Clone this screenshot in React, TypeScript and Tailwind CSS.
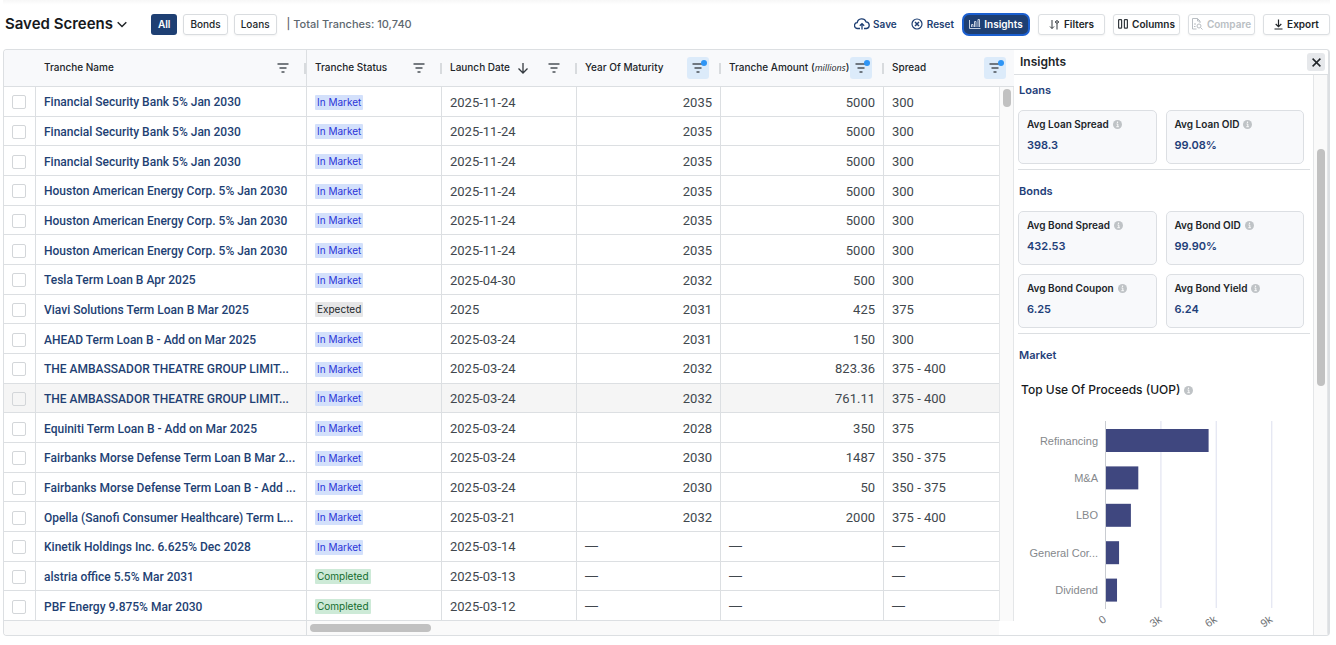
import { ReactNode } from "react";

type Status = "In Market" | "Expected" | "Completed";
type Tranche = { name: string; status: Status; launch: string; year: string; amount: string; spread: string };

const row = (name: string, status: Status, launch: string, year: string, amount: string, spread: string): Tranche => ({
  name,
  status,
  launch,
  year,
  amount,
  spread,
});

const tranches: Tranche[] = [
  row("Financial Security Bank 5% Jan 2030", "In Market", "2025-11-24", "2035", "5000", "300"),
  row("Financial Security Bank 5% Jan 2030", "In Market", "2025-11-24", "2035", "5000", "300"),
  row("Financial Security Bank 5% Jan 2030", "In Market", "2025-11-24", "2035", "5000", "300"),
  row("Houston American Energy Corp. 5% Jan 2030", "In Market", "2025-11-24", "2035", "5000", "300"),
  row("Houston American Energy Corp. 5% Jan 2030", "In Market", "2025-11-24", "2035", "5000", "300"),
  row("Houston American Energy Corp. 5% Jan 2030", "In Market", "2025-11-24", "2035", "5000", "300"),
  row("Tesla Term Loan B Apr 2025", "In Market", "2025-04-30", "2032", "500", "300"),
  row("Viavi Solutions Term Loan B Mar 2025", "Expected", "2025", "2031", "425", "375"),
  row("AHEAD Term Loan B - Add on Mar 2025", "In Market", "2025-03-24", "2031", "150", "300"),
  row("THE AMBASSADOR THEATRE GROUP LIMIT...", "In Market", "2025-03-24", "2032", "823.36", "375 - 400"),
  row("THE AMBASSADOR THEATRE GROUP LIMIT...", "In Market", "2025-03-24", "2032", "761.11", "375 - 400"),
  row("Equiniti Term Loan B - Add on Mar 2025", "In Market", "2025-03-24", "2028", "350", "375"),
  row("Fairbanks Morse Defense Term Loan B Mar 2...", "In Market", "2025-03-24", "2030", "1487", "350 - 375"),
  row("Fairbanks Morse Defense Term Loan B - Add ...", "In Market", "2025-03-24", "2030", "50", "350 - 375"),
  row("Opella (Sanofi Consumer Healthcare) Term L...", "In Market", "2025-03-21", "2032", "2000", "375 - 400"),
  row("Kinetik Holdings Inc. 6.625% Dec 2028", "In Market", "2025-03-14", "", "", ""),
  row("alstria office 5.5% Mar 2031", "Completed", "2025-03-13", "", "", ""),
  row("PBF Energy 9.875% Mar 2030", "Completed", "2025-03-12", "", "", ""),
];

const highlighted = 10;

const statusStyle: Record<Status, string> = {
  "In Market": "bg-[#d3e0fb] text-[#2b35d8]",
  Expected: "bg-[#e6e6e7] text-[#212529]",
  Completed: "bg-[#cdead7] text-[#146c2e]",
};

function FilterIcon() {
  return (
    <svg width="14" height="12" viewBox="0 0 14 12" stroke="#4b5258" strokeWidth="1.6" fill="none" aria-hidden="true">
      <path d="M1.500 2h11M3.500 6h7M5.500 10h3" />
    </svg>
  );
}

function FilterButton({ label, active = false }: { label: string; active?: boolean }) {
  return (
    <button
      type="button"
      aria-label={`Filter ${label}`}
      className={
        active
          ? "relative flex h-[22px] w-[22px] shrink-0 items-center justify-center rounded-[3px] bg-[#dcebfa]"
          : "flex h-[22px] w-[22px] shrink-0 items-center justify-center"
      }
    >
      <FilterIcon />
      {active && <span className="absolute top-[3px] right-[2px] h-[6px] w-[6px] rounded-full bg-[#2f95f5]" />}
    </button>
  );
}

function HeaderCell({
  label,
  note,
  active,
  sorted,
  divider = true,
  frame = "",
  span = 1,
}: {
  label: string;
  note?: string;
  active?: boolean;
  sorted?: boolean;
  divider?: boolean;
  frame?: string;
  span?: number;
}) {
  return (
    <th scope="col" colSpan={span} className={`h-[37px] border-b border-[#dcdfe2] bg-[#f8f9fb] p-0 font-medium ${frame}`}>
      <div className="flex items-center">
        <span className="flex-1 pb-px pl-2 text-left whitespace-nowrap">
          {label}
          {note && (
            <>
              {" "}(<em className="font-['Open_Sans',sans-serif] text-[9px] font-normal">{note}</em>)
            </>
          )}
        </span>
        {sorted && (
          <svg className="mr-3.5 shrink-0" width="12" height="12" viewBox="0 0 12 12" fill="none" stroke="#33393e" strokeWidth="1.3" aria-label="Sorted descending">
            <path d="M6 1v10M1.500 6.500L6 11l4.500-4.500" />
          </svg>
        )}
        <FilterButton label={label} active={active} />
        <span className={divider ? "ml-2.5 h-[11px] w-[2px] bg-[#d8dbde]" : "ml-2 h-[11px]"} />
      </div>
    </th>
  );
}

function InfoIcon() {
  return (
    <svg width="9" height="9" viewBox="0 0 9 9" aria-hidden="true">
      <circle cx="4.500" cy="4.500" r="4.500" fill="#bfc3c6" />
      <path d="M3.500 4h1.300v2.600M3.300 6.700h2.600" stroke="#fff" strokeWidth="0.900" fill="none" />
      <circle cx="4.500" cy="2.300" r="0.700" fill="#fff" />
    </svg>
  );
}

function Stat({ label, value }: { label: string; value: string }) {
  return (
    <div className="h-[54px] rounded-[5px] border border-[#dcdfe3] bg-[#f8f9fb] px-2 pt-[5px]">
      <div className="flex items-center gap-1 text-[10px] leading-4 font-semibold whitespace-nowrap text-[#212529]">
        {label} <InfoIcon />
      </div>
      <div className="mt-[3px] text-[11px] leading-5 font-semibold text-[#1f4079]">{value}</div>
    </div>
  );
}

function Section({ title, children }: { title: string; children: ReactNode }) {
  return (
    <section className="mb-[11px] border-b border-[#dcdfe2] pr-1.5 pb-[5px]">
      <h3 className="mb-2.5 pl-px text-[11px] leading-5 font-semibold text-[#1f4079]">{title}</h3>
      <div className="grid grid-cols-2 gap-[9px]">{children}</div>
    </section>
  );
}

const uses = [
  { label: "Refinancing", value: 5600 },
  { label: "M&A", value: 1800 },
  { label: "LBO", value: 1400 },
  { label: "General Cor...", value: 760 },
  { label: "Dividend", value: 650 },
];

function ProceedsChart() {
  const x0 = 87;
  const perK = 18.5;
  return (
    <svg className="mt-[20px] block" width="292" height="214" viewBox="0 0 292 214" role="img" aria-label="Top use of proceeds" fontFamily="'Liberation Sans', Arial, sans-serif">
      {[1, 2, 3].map((i) => (
        <line key={i} x1={x0 + 0.5 + i * 55.4} x2={x0 + 0.5 + i * 55.4} y1="1" y2="188" stroke="#e6e8f3" strokeWidth="1.400" />
      ))}
      {uses.map((u, i) => (
        <g key={u.label}>
          <rect x={x0} y={9 + i * 37.4} width={(u.value / 1000) * perK} height="23" fill="#3f477f" />
          <text x={x0 - 7} y={24.5 + i * 37.4} textAnchor="end" fontSize="11" fill="#85888c">
            {u.label}
          </text>
        </g>
      ))}
      <line x1={x0 + 0.5} x2={x0 + 0.5} y1="1" y2="189" stroke="#c9ccd1" />
      {["0", "3k", "6k", "9k"].map((t, i) => (
        <text key={t} transform={`translate(${x0 + 2 + i * 55.4} 201) rotate(-35)`} textAnchor="end" fontSize="11" fill="#6f7276">
          {t}
        </text>
      ))}
    </svg>
  );
}

const outlined =
  "flex h-[21px] w-[67px] items-center justify-center gap-1 rounded-[3px] border border-[#dcdfe2] bg-white text-[10px] font-semibold whitespace-nowrap text-[#212529] shadow-xs";
const chip = "h-[21px] rounded-[3px] border border-[#d9dcdf] px-1.5 text-[10px] font-medium text-[#212529] shadow-xs";

function Toolbar() {
  return (
    <header className="flex h-[49px] shrink-0 items-center bg-linear-to-b from-[#f7f7f7] from-0% to-white to-10% pb-px pl-0.5">
      <button type="button" className="flex items-center gap-1 text-[15px] font-semibold text-[#16191c]">
        Saved Screens
        <svg width="10" height="7" viewBox="0 0 10 7" fill="none" stroke="#212529" strokeWidth="1.500" aria-hidden="true">
          <path d="M0.700 1.200L5 5.500l4.300-4.300" />
        </svg>
      </button>
      <div className="ml-6 flex gap-1.5">
        <button type="button" className="h-[21px] rounded-[3px] bg-[#1e3f73] px-[7px] text-[10px] font-semibold text-white">
          All
        </button>
        <button type="button" className={chip}>Bonds</button>
        <button type="button" className={chip}>Loans</button>
      </div>
      <p className="ml-2.5 text-[11px] font-medium text-[#5d676f]">| Total Tranches: 10,740</p>
      <div className="ml-auto flex items-center gap-2">
        <button type="button" className="mr-1.5 flex items-center gap-[3px] text-[10px] font-semibold text-[#1e3f73]">
          <svg width="16" height="12" viewBox="0 0 16 12" fill="none" stroke="currentColor" strokeWidth="1.300" aria-hidden="true">
            <path d="M6 10.500H3.600A2.900 2.900 0 0 1 3.200 4.700 4.600 4.600 0 0 1 12 3.800a3.400 3.400 0 0 1 .6 6.700H10M8 11.500V5.800M5.800 7.800L8 5.600l2.200 2.200" />
          </svg>
          Save
        </button>
        <button type="button" className="flex items-center gap-1 text-[10px] font-semibold text-[#1e3f73]">
          <svg width="12" height="12" viewBox="0 0 12 12" fill="none" stroke="currentColor" strokeWidth="1.200" aria-hidden="true">
            <circle cx="6" cy="6" r="5" />
            <path d="M4 4l4 4M8 4L4 8" strokeWidth="1.500" />
          </svg>
          Reset
        </button>
        <button type="button" className="flex h-[23px] w-[68px] items-center justify-center gap-[3px] rounded-[7px] border-2 border-[#1b5fd0] bg-[#1e3f73] text-[10px] font-semibold text-white">
          <svg width="12" height="10" viewBox="0 0 12 10" fill="none" stroke="#c5cfde" aria-hidden="true">
            <path d="M.5 1v8.500h11M2.500 8V5.500h1.500V8M5.500 8V2.500H7V8M9 8V.5h1.500V8" />
          </svg>
          Insights
        </button>
        <button type="button" className={outlined}>
          <svg width="11" height="11" viewBox="0 0 11 11" fill="none" stroke="#33393e" aria-hidden="true">
            <path d="M3 1v8.500M1 7.500l2 2 2-2M8 10.500V4.500M6 3h4" />
            <circle cx="8" cy="3" r="1.300" fill="#fff" />
          </svg>
          Filters
        </button>
        <button type="button" className={outlined}>
          <svg width="10" height="10" viewBox="0 0 10 10" fill="none" stroke="#33393e" strokeWidth="1.200" aria-hidden="true">
            <rect x=".6" y=".6" width="3" height="8.600" rx=".6" />
            <rect x="6.400" y=".6" width="3" height="8.600" rx=".6" />
          </svg>
          Columns
        </button>
        <button type="button" disabled className={`${outlined} text-[#b9bec3]!`}>
          <svg width="11" height="12" viewBox="0 0 11 12" fill="none" stroke="#b9bec3" aria-hidden="true">
            <path d="M4.500 11H.5V.5h5l2.500 2.500v2M5.500.5V3H8M2 6h2M2 8.500h1.500" />
            <circle cx="7" cy="8" r="2" />
            <path d="M8.500 9.500l2 2" />
          </svg>
          Compare
        </button>
        <button type="button" className={outlined}>
          <svg width="9" height="11" viewBox="0 0 9 11" fill="none" stroke="#212529" strokeWidth="1.200" aria-hidden="true">
            <path d="M4.500.5v7M1.700 5l2.800 2.700L7.300 5M.5 10h8" />
          </svg>
          Export
        </button>
      </div>
    </header>
  );
}

function Dash() {
  return <span className="font-[Inter,sans-serif]">—</span>;
}

function TrancheTable() {
  const cell = "border-r border-b border-[#dcdfe2] px-2 pt-0.5 pb-0";
  return (
    <table className="w-full flex-1 table-fixed border-separate border-spacing-0 text-[10px] text-[#212529]">
      <colgroup>
        <col className="w-[32px]" />
        <col className="w-[271px]" />
        <col className="w-[135px]" />
        <col className="w-[135px]" />
        <col className="w-[144px]" />
        <col className="w-[163px]" />
        <col />
        <col className="w-[15px]" />
      </colgroup>
      <thead>
        <tr>
          <td className="h-[37px] border-b border-[#dcdfe2] bg-[#f8f9fb] p-0" />
          <HeaderCell label="Tranche Name" frame="border-r" />
          <HeaderCell label="Tranche Status" />
          <HeaderCell label="Launch Date" sorted />
          <HeaderCell label="Year Of Maturity" active />
          <HeaderCell label="Tranche Amount" note="millions" active />
          <HeaderCell label="Spread" active divider={false} span={2} />
        </tr>
      </thead>
      <tbody className="font-[Roboto,sans-serif] text-[13px] text-[#41474d]">
        {tranches.map((t, i) => (
          <tr key={i} className={i === highlighted ? "bg-[#f5f5f5]" : "bg-white"}>
            <td className="border-r border-b border-[#dcdfe2] p-0 pt-0.5">
              <input
                type="checkbox"
                aria-label={`Select ${t.name}`}
                className="ml-2 block h-[14px] w-[14px] appearance-none rounded-[2px] border border-[#d3d6d9]"
              />
            </td>
            <td className={`${cell} text-[12px] font-medium whitespace-nowrap text-[#1e3f73]`}>{t.name}</td>
            <td className={cell}>
              <span className={`block w-fit rounded-[1px] px-0.5 font-[Inter,sans-serif] text-[10px] leading-[15px] ${statusStyle[t.status]}`}>
                {t.status}
              </span>
            </td>
            <td className={cell}>{t.launch}</td>
            <td className={`${cell} ${t.year ? "text-right" : ""}`}>{t.year || <Dash />}</td>
            <td className={`${cell} ${t.amount ? "text-right" : ""}`}>{t.amount || <Dash />}</td>
            <td className="border-b border-[#dcdfe2] px-2 pt-0.5 pb-0">{t.spread || <Dash />}</td>
            {i === 0 && (
              <td rowSpan={tranches.length} className="border-x border-[#e4e6e8] bg-[#fafafa] p-0 pt-0.5 align-top" aria-hidden="true">
                <div className="mx-auto h-[18px] w-[8px] rounded-full bg-[#c1c1c1]" />
              </td>
            )}
          </tr>
        ))}
      </tbody>
    </table>
  );
}

function InsightsPanel() {
  return (
    <aside className="flex w-[314px] shrink-0 flex-col overflow-hidden bg-white">
      <div className="flex h-[25px] shrink-0 items-center justify-between border-b border-[#dcdfe2] pr-[3px] pl-1.5">
        <h2 className="text-[12px] font-semibold text-[#212529]">Insights</h2>
        <button type="button" aria-label="Close insights" className="flex h-[18px] w-[18px] items-center justify-center rounded-[3px] bg-[#e6e8eb]">
          <svg width="9" height="9" viewBox="0 0 9 9" stroke="#212529" strokeWidth="1.500" aria-hidden="true">
            <path d="M.6.6l7.800 7.800M8.400.6L.6 8.400" />
          </svg>
        </button>
      </div>
      <div className="flex min-h-0 flex-1">
        <div className="min-w-0 flex-1 overflow-hidden pt-[5px] pr-[3px] pl-1">
          <Section title="Loans">
            <Stat label="Avg Loan Spread" value="398.3" />
            <Stat label="Avg Loan OID" value="99.08%" />
          </Section>
          <Section title="Bonds">
            <Stat label="Avg Bond Spread" value="432.53" />
            <Stat label="Avg Bond OID" value="99.90%" />
            <Stat label="Avg Bond Coupon" value="6.25" />
            <Stat label="Avg Bond Yield" value="6.24" />
          </Section>
          <section>
            <h3 className="pl-px text-[11px] leading-5 font-semibold text-[#1f4079]">Market</h3>
            <h4 className="mt-[15px] flex items-center gap-1 pl-[3px] text-[12px] leading-5 font-medium text-[#16191c]">
              Top Use Of Proceeds (UOP) <InfoIcon />
            </h4>
            <ProceedsChart />
          </section>
        </div>
        <div className="w-[15px] border-x border-[#e4e6e8] bg-[#fafafa] pt-[74px]" aria-hidden="true">
          <div className="mx-auto h-[237px] w-[8px] rounded-full bg-[#c1c1c1]" />
        </div>
      </div>
    </aside>
  );
}

export default function App() {
  return (
    <div className="flex h-screen flex-col bg-white pr-1.5 pb-[9px] pl-[3px] font-[Inter,sans-serif]">
      <Toolbar />
      <main className="flex min-h-0 flex-1 overflow-hidden rounded-[4px] border border-r-2 border-[#dcdfe2]">
        <div className="flex min-w-0 flex-1 flex-col">
          <div className="grid min-h-0 flex-1">
            <TrancheTable />
          </div>
          <div className="mr-[15px] flex h-[14px] shrink-0 bg-[#fafafa]" aria-hidden="true">
            <div className="w-[303px] border-r border-[#dcdfe2]" />
            <div className="mt-[3px] ml-[3px] h-[8px] w-[121px] rounded-full bg-[#c1c1c1]" />
          </div>
        </div>
        <InsightsPanel />
      </main>
    </div>
  );
}
